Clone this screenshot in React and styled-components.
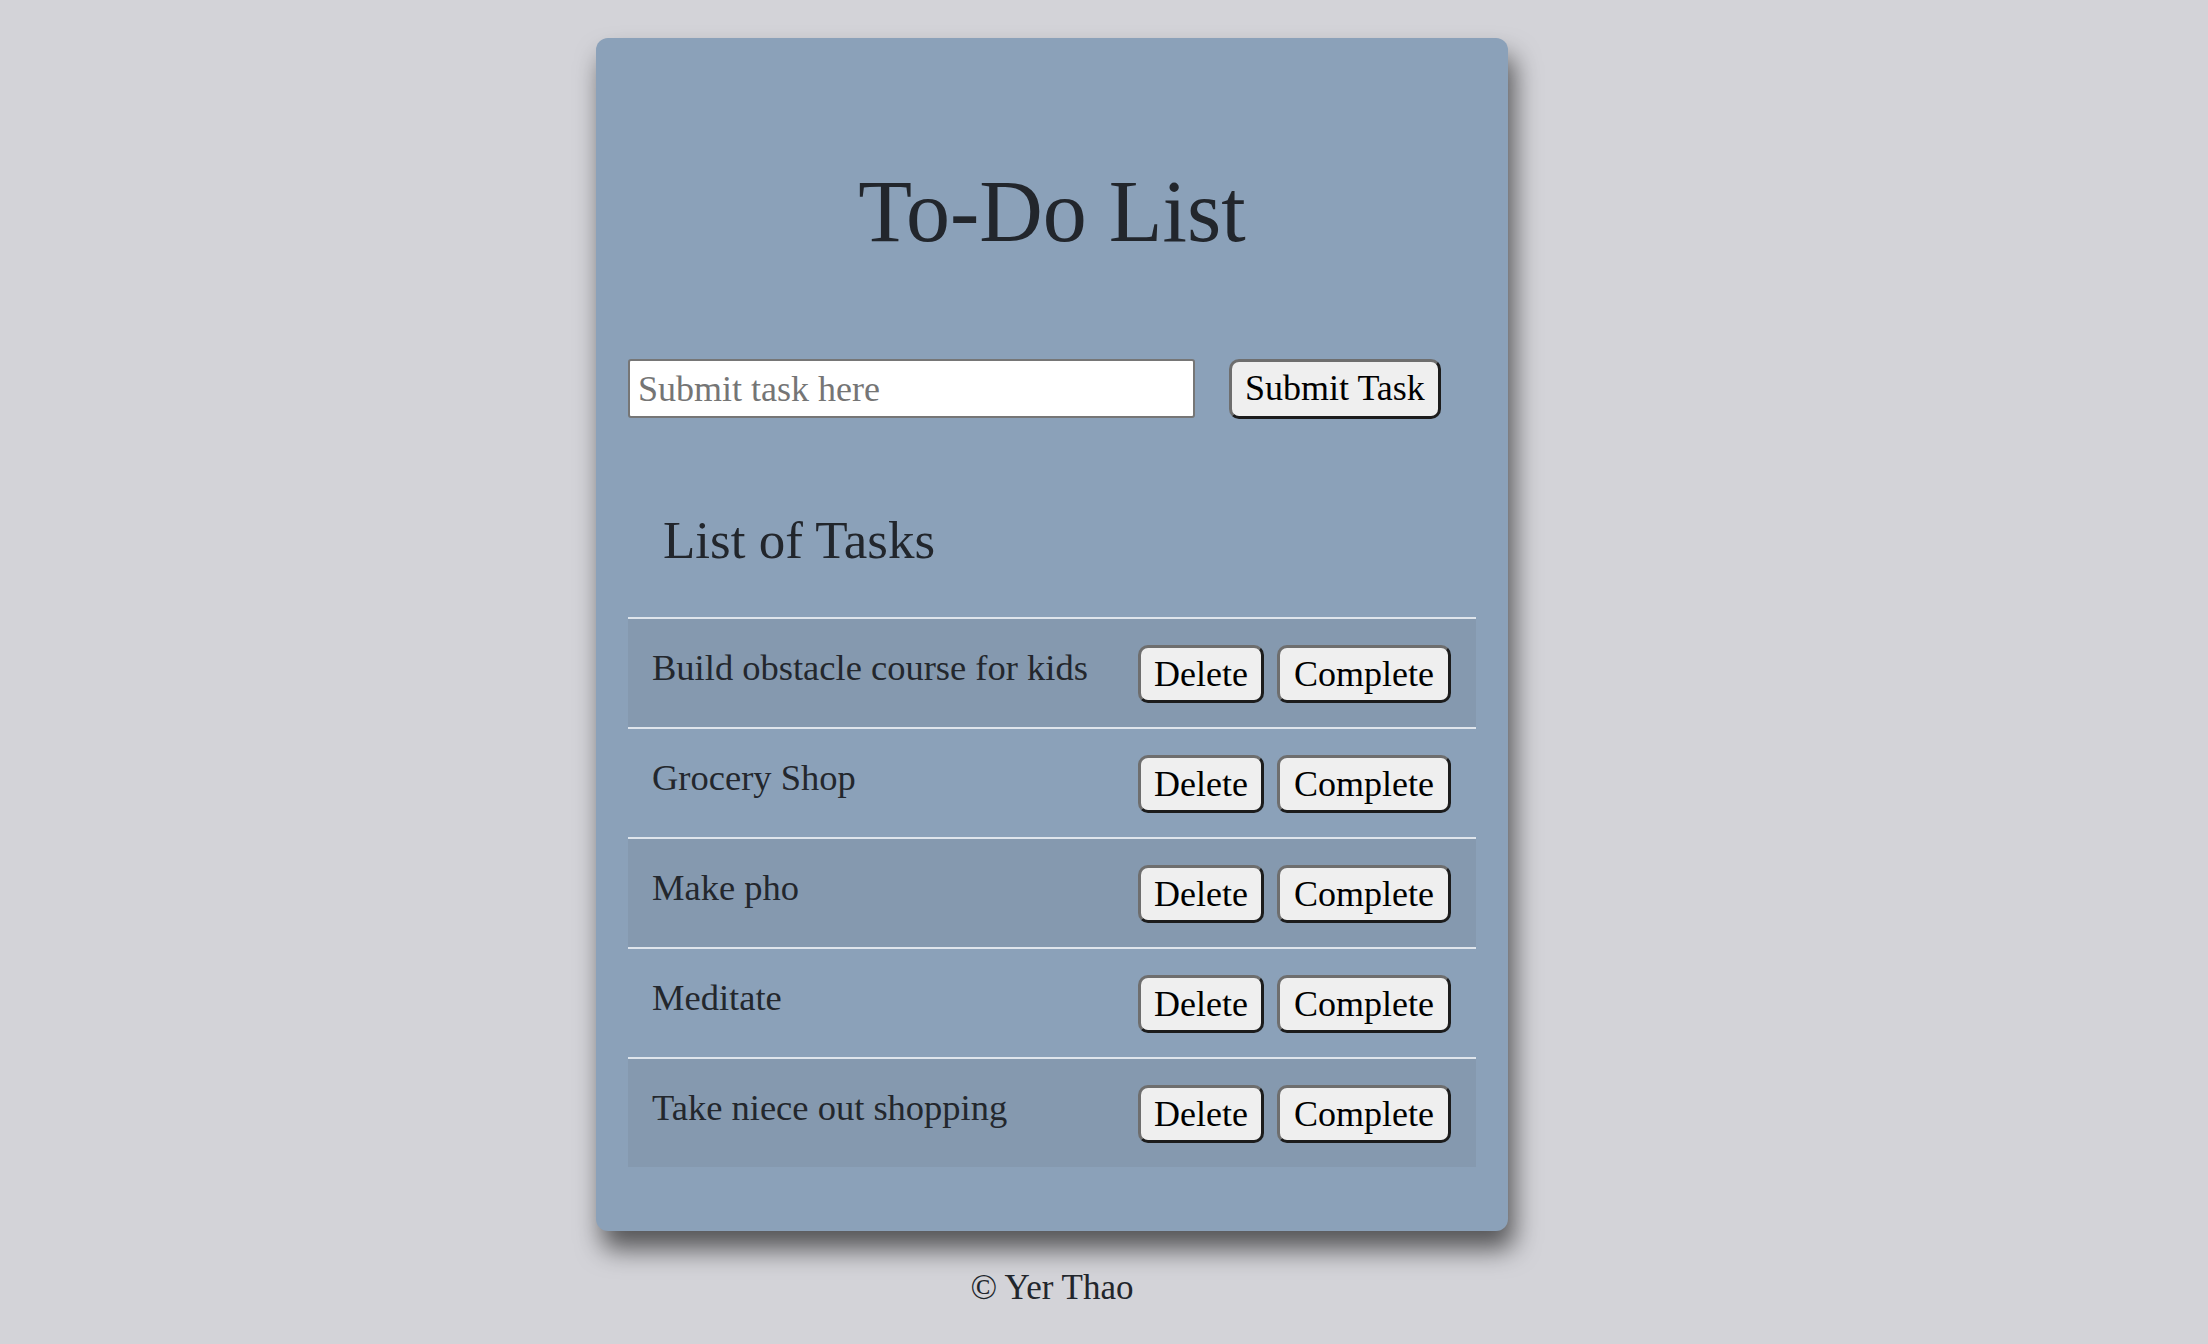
import React, { useState } from "react";
import styled, { createGlobalStyle } from "styled-components";

const GlobalStyle = createGlobalStyle`
  body {
    margin: 0;
    background: #d3d3d8;
    font-family: "Liberation Serif", "Times New Roman", serif;
    color: #22262c;
  }
`;

const Page = styled.div`
  display: flex;
  flex-direction: column;
  align-items: center;
  padding: 38px 104px 40px 0;
`;

const Card = styled.main`
  box-sizing: border-box;
  width: 912px;
  padding: 0 32px 64px;
  background: #8ba1b9;
  border-radius: 12px;
  box-shadow: 6px 18px 26px rgba(0, 0, 0, 0.6);
`;

const Title = styled.h1`
  margin: 121px 0 0;
  font-size: 88px;
  font-weight: 400;
  line-height: 1.2;
  text-align: center;
`;

const Form = styled.form`
  display: flex;
  align-items: center;
  gap: 34px;
  margin-top: 94px;
`;

const TaskInput = styled.input`
  box-sizing: border-box;
  width: 567px;
  height: 59px;
  padding: 0 8px;
  border: 2px solid #767676;
  border-radius: 3px;
  background: #fff;
  font: 36px "Liberation Serif", serif;
  color: #222;

  &::placeholder {
    color: #757575;
  }
`;

const Button = styled.button`
  box-sizing: border-box;
  height: ${(p) => (p.$tall ? "60px" : "58px")};
  padding: 0 ${(p) => p.$pad || 13}px;
  border: 3px solid;
  border-color: #6e6e6e #1c1c1c #1c1c1c #6e6e6e;
  border-radius: 10px;
  background: #efefef;
  font: 36px/1.2 "Liberation Serif", serif;
  color: #000;
  cursor: pointer;
`;

const Heading = styled.h2`
  margin: 90px 0 0 35px;
  font-size: 53px;
  font-weight: 400;
  line-height: 1.2;
`;

const List = styled.ul`
  list-style: none;
  margin: 45px 0 0;
  padding: 0;
`;

const Row = styled.li`
  display: flex;
  justify-content: space-between;
  align-items: flex-start;
  padding: 26px 25px 24px 24px;
  border-top: 2px solid #dfe5ec;
  background: ${(p) => (p.$odd ? "#8599af" : "transparent")};
`;

const TaskText = styled.span`
  font-size: 36.5px;
  line-height: 1.2;
  margin-top: 1px;
  color: #23272d;
`;

const Actions = styled.div`
  display: flex;
  gap: 13px;
`;

const Footer = styled.footer`
  margin-top: 36px;
  font-size: 35px;
  line-height: 1.2;
  color: #22262c;
`;

const initialTasks = [
  "Build obstacle course for kids",
  "Grocery Shop",
  "Make pho",
  "Meditate",
  "Take niece out shopping",
];

export default function App() {
  const [tasks, setTasks] = useState(initialTasks);
  const [text, setText] = useState("");

  const submit = (e) => {
    e.preventDefault();
    if (!text.trim()) return;
    setTasks([...tasks, text.trim()]);
    setText("");
  };

  const remove = (i) => setTasks(tasks.filter((_, j) => j !== i));

  return (
    <>
      <GlobalStyle />
      <Page>
        <Card>
          <Title>To-Do List</Title>
          <Form onSubmit={submit}>
            <TaskInput
              placeholder="Submit task here"
              value={text}
              onChange={(e) => setText(e.target.value)}
            />
            <Button type="submit" $tall $pad={13}>
              Submit Task
            </Button>
          </Form>
          <Heading>List of Tasks</Heading>
          <List>
            {tasks.map((task, i) => (
              <Row key={task + i} $odd={i % 2 === 0}>
                <TaskText>{task}</TaskText>
                <Actions>
                  <Button $pad={13} onClick={() => remove(i)}>
                    Delete
                  </Button>
                  <Button $pad={14} onClick={() => remove(i)}>
                    Complete
                  </Button>
                </Actions>
              </Row>
            ))}
          </List>
        </Card>
        <Footer>© Yer Thao</Footer>
      </Page>
    </>
  );
}
